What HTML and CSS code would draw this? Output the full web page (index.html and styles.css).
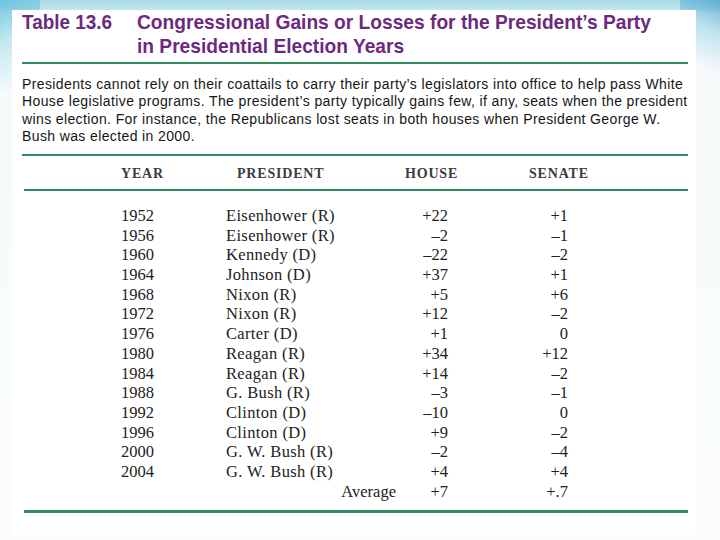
FILE: index.html
```html
<!DOCTYPE html>
<html>
<head>
<meta charset="utf-8">
<link rel="stylesheet" href="styles.css">
</head>
<body>
<div class="card">
  <div class="title">
    <div class="tnum"><span class="sq">Table 13.6</span></div>
    <div class="ttext"><span class="sq">Congressional Gains or Losses for the President’s Party</span><br><span class="sq">in Presidential Election Years</span></div>
  </div>
  <div class="rule rule-a"></div>
  <p class="intro">Presidents cannot rely on their coattails to carry their party’s legislators into office to help pass White<br>House legislative programs. The president’s party typically gains few, if any, seats when the president<br>wins election. For instance, the Republicans lost seats in both houses when President George W.<br>Bush was elected in 2000.</p>
  <div class="rule rule-b"></div>
  <div class="head">
    <span class="c-year">YEAR</span><span class="c-pres">PRESIDENT</span><span class="c-house">HOUSE</span><span class="c-sen">SENATE</span>
  </div>
  <div class="rule rule-c"></div>
  <div class="rows">
    <div class="row"><span class="c-year">1952</span><span class="c-pres">Eisenhower (R)</span><span class="c-house">+22</span><span class="c-sen">+1</span></div>
    <div class="row"><span class="c-year">1956</span><span class="c-pres">Eisenhower (R)</span><span class="c-house">–2</span><span class="c-sen">–1</span></div>
    <div class="row"><span class="c-year">1960</span><span class="c-pres">Kennedy (D)</span><span class="c-house">–22</span><span class="c-sen">–2</span></div>
    <div class="row"><span class="c-year">1964</span><span class="c-pres">Johnson (D)</span><span class="c-house">+37</span><span class="c-sen">+1</span></div>
    <div class="row"><span class="c-year">1968</span><span class="c-pres">Nixon (R)</span><span class="c-house">+5</span><span class="c-sen">+6</span></div>
    <div class="row"><span class="c-year">1972</span><span class="c-pres">Nixon (R)</span><span class="c-house">+12</span><span class="c-sen">–2</span></div>
    <div class="row"><span class="c-year">1976</span><span class="c-pres">Carter (D)</span><span class="c-house">+1</span><span class="c-sen">0</span></div>
    <div class="row"><span class="c-year">1980</span><span class="c-pres">Reagan (R)</span><span class="c-house">+34</span><span class="c-sen">+12</span></div>
    <div class="row"><span class="c-year">1984</span><span class="c-pres">Reagan (R)</span><span class="c-house">+14</span><span class="c-sen">–2</span></div>
    <div class="row"><span class="c-year">1988</span><span class="c-pres">G. Bush (R)</span><span class="c-house">–3</span><span class="c-sen">–1</span></div>
    <div class="row"><span class="c-year">1992</span><span class="c-pres">Clinton (D)</span><span class="c-house">–10</span><span class="c-sen">0</span></div>
    <div class="row"><span class="c-year">1996</span><span class="c-pres">Clinton (D)</span><span class="c-house">+9</span><span class="c-sen">–2</span></div>
    <div class="row"><span class="c-year">2000</span><span class="c-pres">G. W. Bush (R)</span><span class="c-house">–2</span><span class="c-sen">–4</span></div>
    <div class="row"><span class="c-year">2004</span><span class="c-pres">G. W. Bush (R)</span><span class="c-house">+4</span><span class="c-sen">+4</span></div>
    <div class="row avg"><span class="c-avg">Average</span><span class="c-house">+7</span><span class="c-sen">+.7</span></div>
  </div>
  <div class="rule rule-d"></div>
</div>
</body>
</html>
```

FILE: styles.css
```css
html, body {
  margin: 0;
  padding: 0;
}
body {
  width: 720px;
  height: 540px;
  overflow: hidden;
  background:
    linear-gradient(160deg, rgba(110,195,222,0.95) 0, rgba(160,220,235,0.6) 40px, rgba(255,255,255,0) 90px) left top / 40px 110px no-repeat,
    linear-gradient(200deg, rgba(90,170,210,0.9) 0, rgba(150,210,230,0.6) 30px, rgba(255,255,255,0) 70px) right top / 40px 80px no-repeat,
    linear-gradient(180deg, #a9dbe8 0, #c3e6ee 10px, #f6fafb 12px, #fafcfc 100%);
  font-family: "Liberation Sans", Arial, sans-serif;
}
.card {
  margin: 10px 0 0 12px;
  width: 684px;
  height: 525px;
  background: #fff;
  padding: 0 8px 0 10px;
  box-sizing: border-box;
}
.title {
  display: flex;
  color: #6c2a7f;
  font-weight: bold;
  font-size: 21px;
  line-height: 24px;
  height: 52px;
  box-sizing: border-box;
}
.tnum {
  width: 115px;
  flex-shrink: 0;
}
.ttext {
  flex: 1;
  min-width: 0;
}
.sq {
  display: inline-block;
  transform: scaleX(0.913);
  transform-origin: left center;
  white-space: nowrap;
}
.tnum .sq {
  transform: scaleX(0.9);
}
.rule {
  background: #2e8b5c;
  width: 666px;
}
.rule-a { height: 2px; }
.intro {
  margin: 0;
  padding-top: 12px;
  font-size: 14px;
  letter-spacing: 0.38px;
  line-height: 17.3px;
  color: #161616;
  height: 90px;
  box-sizing: border-box;
  white-space: nowrap;
}
.rule-b { height: 2px; }
.head {
  display: flex;
  font-family: "Liberation Serif", "Times New Roman", serif;
  font-weight: bold;
  color: #3c3c3c;
  font-size: 14px;
  letter-spacing: 0.8px;
  height: 33px;
  padding-top: 2px;
  box-sizing: border-box;
  align-items: center;
}
.rule-c { height: 2px; margin-left: 2px; width: 664px; }
.rows {
  padding-top: 15px;
  height: 319px;
  box-sizing: border-box;
  font-family: "Liberation Serif", "Times New Roman", serif;
  font-size: 16.5px;
  color: #222;
}
.row {
  display: flex;
  height: 19.7px;
  line-height: 19.7px;
}
.c-year {
  padding-left: 99px;
  flex-shrink: 0;
}
.row .c-year { width: 105px; }
.head .c-year { width: 116px; }
.c-pres { width: 170px; flex-shrink: 0; letter-spacing: 0.35px; }
.head .c-pres { width: 168px; letter-spacing: 0.8px; }
.c-house { width: 52px; text-align: right; flex-shrink: 0; }
.head .c-house { width: 124px; text-align: left; }
.c-sen { width: 120px; text-align: right; flex-shrink: 0; }
.head .c-sen { width: 80px; text-align: left; }
.c-avg {
  width: 374px;
  text-align: right;
  flex-shrink: 0;
}
.rule-d { height: 3px; margin-left: 2px; width: 664px; }
```
